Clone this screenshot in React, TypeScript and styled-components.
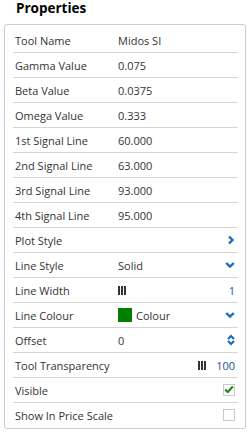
import styled, { createGlobalStyle } from 'styled-components';

const GlobalStyle = createGlobalStyle`
  html, body {
    margin: 0;
    padding: 0;
    background: #ffffff;
  }
  body {
    font-family: "Open Sans", "Liberation Sans", sans-serif;
    color: #333333;
  }
`;

const Page = styled.div`
  width: 250px;
  height: 432px;
  display: flex;
  flex-direction: column;
  box-sizing: border-box;
  padding: 0 4px;
`;

const Title = styled.h1`
  margin: 0;
  height: 24px;
  padding: 1px 0 0 12px;
  box-sizing: border-box;
  font-size: 13.5px;
  font-weight: 700;
  line-height: 14px;
  color: #000000;
`;

const Panel = styled.div`
  border: 1px solid #cccccc;
  border-radius: 3px;
  padding: 3px 7px 1px 8px;
  display: flex;
  flex-direction: column;
`;

const Row = styled.div`
  height: 24px;
  display: flex;
  align-items: center;
  padding: 0 3px 0 2px;
  font-size: 11px;
  border-bottom: 1px solid #d4d4d4;

  &:last-child {
    border-bottom: none;
  }
`;

const Label = styled.span<{ $wide?: boolean }>`
  width: ${(p) => (p.$wide ? 'auto' : '103px')};
  flex: ${(p) => (p.$wide ? '1' : 'none')};
  white-space: nowrap;
`;

const Value = styled.span`
  flex: 1;
  display: flex;
  align-items: center;
  gap: 4px;
`;

const Right = styled.span`
  display: flex;
  align-items: center;
  gap: 10px;
  color: #1a4f96;
`;

const Swatch = styled.span`
  width: 14px;
  height: 14px;
  background: #008000;
`;

const Checkbox = styled.span`
  width: 10px;
  height: 10px;
  border: 1px solid #c8c8c8;
  display: flex;
  align-items: center;
  justify-content: center;
  margin-bottom: 1px;
`;

const Bars = () => (
  <svg width="8" height="9" viewBox="0 0 8 9">
    <rect x="0" y="0" width="2" height="9" fill="#333" />
    <rect x="3" y="0" width="2" height="9" fill="#333" />
    <rect x="6" y="0" width="2" height="9" fill="#333" />
  </svg>
);

const ChevronRight = () => (
  <svg width="8" height="10" viewBox="0 0 8 10">
    <path d="M2 1.5 L5.5 5 L2 8.5" fill="none" stroke="#1b6ac0" strokeWidth="2.4" />
  </svg>
);

const ChevronDown = () => (
  <svg width="10" height="8" viewBox="0 0 10 8">
    <path d="M1.2 2 L5 5.6 L8.8 2" fill="none" stroke="#1b6ac0" strokeWidth="2.4" />
  </svg>
);

const UpDown = () => (
  <svg width="8" height="12" viewBox="0 0 8 12">
    <path d="M1 5 L4 2 L7 5" fill="none" stroke="#1b6ac0" strokeWidth="2.2" />
    <path d="M1 7 L4 10 L7 7" fill="none" stroke="#1b6ac0" strokeWidth="2.2" />
  </svg>
);

const Tick = () => (
  <svg width="10" height="9" viewBox="0 0 10 9">
    <path d="M1.2 4.6 L3.8 7 L8.8 1.6" fill="none" stroke="#1e8a1e" strokeWidth="2.2" />
  </svg>
);

const simple: [string, string][] = [
  ['Tool Name', 'Midos SI'],
  ['Gamma Value', '0.075'],
  ['Beta Value', '0.0375'],
  ['Omega Value', '0.333'],
  ['1st Signal Line', '60.000'],
  ['2nd Signal Line', '63.000'],
  ['3rd Signal Line', '93.000'],
  ['4th Signal Line', '95.000'],
];

export default function App() {
  return (
    <Page>
      <GlobalStyle />
      <Title>Properties</Title>
      <Panel>
        {simple.map(([label, value]) => (
          <Row key={label}>
            <Label>{label}</Label>
            <Value>{value}</Value>
          </Row>
        ))}
        <Row>
          <Label $wide>Plot Style</Label>
          <Right><ChevronRight /></Right>
        </Row>
        <Row>
          <Label>Line Style</Label>
          <Value>Solid</Value>
          <Right><ChevronDown /></Right>
        </Row>
        <Row>
          <Label>Line Width</Label>
          <Value><Bars /></Value>
          <Right>1</Right>
        </Row>
        <Row>
          <Label>Line Colour</Label>
          <Value><Swatch />Colour</Value>
          <Right><ChevronDown /></Right>
        </Row>
        <Row>
          <Label>Offset</Label>
          <Value>0</Value>
          <Right><UpDown /></Right>
        </Row>
        <Row>
          <Label $wide>Tool Transparency</Label>
          <Right><Bars />100</Right>
        </Row>
        <Row>
          <Label $wide>Visible</Label>
          <Checkbox><Tick /></Checkbox>
        </Row>
        <Row>
          <Label $wide>Show In Price Scale</Label>
          <Checkbox />
        </Row>
      </Panel>
    </Page>
  );
}
